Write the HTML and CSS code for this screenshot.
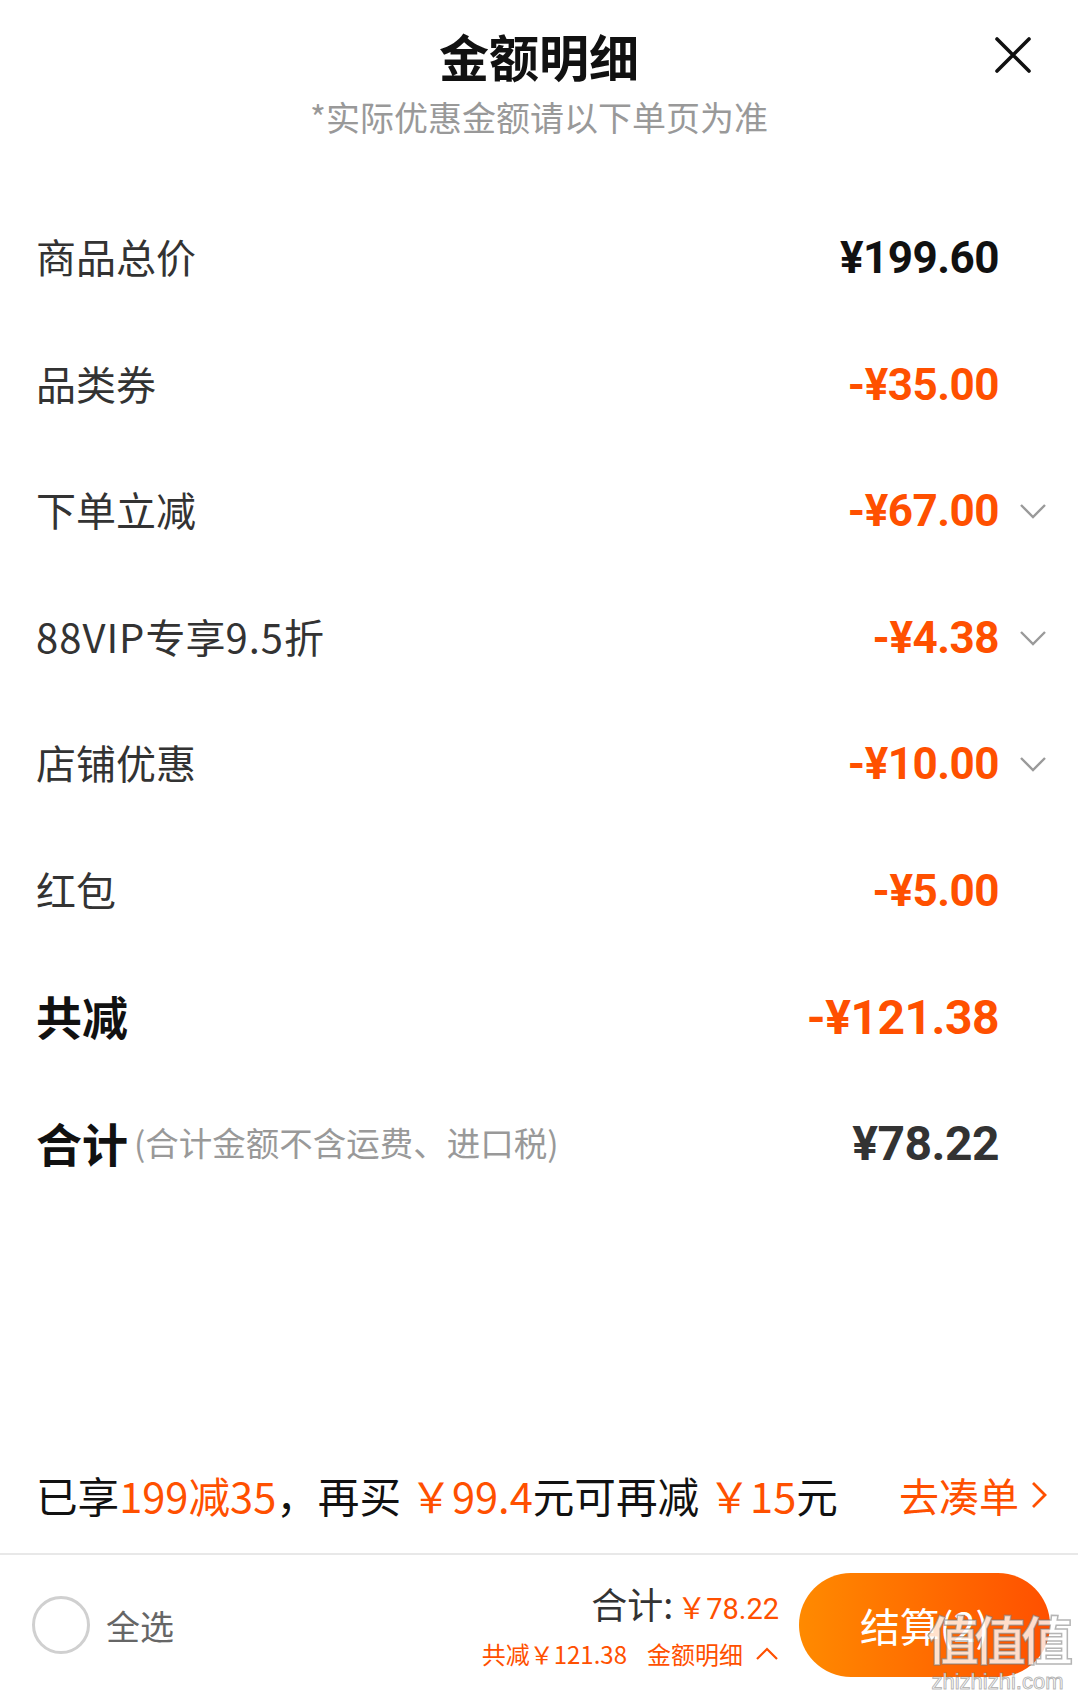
FILE: index.html
```html
<!DOCTYPE html>
<html lang="zh-CN">
<head>
    <meta charset="UTF-8">
    <title>金额明细</title>
    <link rel="stylesheet" href="styles.css">
</head>
<body>

<div class="sheet">
    <header class="sheet-head">
        <h1 class="title">金额明细</h1>
        <button class="close" aria-label="关闭">
            <svg width="36" height="36" viewBox="0 0 36 36">
                <path d="M2 2 L34 34 M34 2 L2 34" stroke="#111" stroke-width="3.6" stroke-linecap="round" fill="none"/>
            </svg>
        </button>
        <p class="subtitle">*实际优惠金额请以下单页为准</p>
    </header>

    <ul class="detail-list">
        <li class="row">
            <span class="label">商品总价</span>
            <span class="amount">¥199.60</span>
            <span class="arrow"></span>
        </li>
        <li class="row">
            <span class="label">品类券</span>
            <span class="amount minus">-¥35.00</span>
            <span class="arrow"></span>
        </li>
        <li class="row">
            <span class="label">下单立减</span>
            <span class="amount minus">-¥67.00</span>
            <span class="arrow"><svg width="28" height="18" viewBox="0 0 28 18"><path d="M2 3 L14 15 L26 3" stroke="#9a9a9a" stroke-width="2.4" fill="none"/></svg></span>
        </li>
        <li class="row">
            <span class="label"><span class="latin">88VIP</span>专享<span class="latin">9.5</span>折</span>
            <span class="amount minus">-¥4.38</span>
            <span class="arrow"><svg width="28" height="18" viewBox="0 0 28 18"><path d="M2 3 L14 15 L26 3" stroke="#9a9a9a" stroke-width="2.4" fill="none"/></svg></span>
        </li>
        <li class="row">
            <span class="label">店铺优惠</span>
            <span class="amount minus">-¥10.00</span>
            <span class="arrow"><svg width="28" height="18" viewBox="0 0 28 18"><path d="M2 3 L14 15 L26 3" stroke="#9a9a9a" stroke-width="2.4" fill="none"/></svg></span>
        </li>
        <li class="row">
            <span class="label">红包</span>
            <span class="amount minus">-¥5.00</span>
            <span class="arrow"></span>
        </li>
        <li class="row row-strong">
            <span class="label">共减</span>
            <span class="amount minus">-¥121.38</span>
            <span class="arrow"></span>
        </li>
        <li class="row row-strong">
            <span class="label label-total">合计<span class="note">(合计金额不含运费、进口税)</span></span>
            <span class="amount total">¥78.22</span>
            <span class="arrow"></span>
        </li>
    </ul>

    <div class="spacer"></div>

    <div class="promo">
        <p class="promo-text">已享<em>199减35</em>，再买 <em>￥99.4</em>元可再减 <em>￥15</em>元</p>
        <a class="promo-link" href="#">去凑单
            <svg width="16" height="30" viewBox="0 0 16 30"><path d="M2 3 L14 15 L2 27" stroke="#ff5000" stroke-width="2.8" fill="none"/></svg>
        </a>
    </div>

    <footer class="bar">
        <label class="select-all">
            <span class="radio"></span>
            <span>全选</span>
        </label>
        <div class="bar-right">
            <div class="sum">
                <div class="sum-main">合计:<span class="sum-price">￥78.22</span></div>
                <div class="sum-sub">共减￥121.38<span class="sum-detail">金额明细
                    <svg width="24" height="14" viewBox="0 0 24 14"><path d="M2 12 L12 2 L22 12" stroke="#ff5000" stroke-width="2.2" fill="none"/></svg></span>
                </div>
            </div>
            <button class="checkout">结算(2)</button>
        </div>
        <div class="watermark">
            <span class="wm-big">值值值</span>
            <span class="wm-small">zhizhizhi.com</span>
        </div>
    </footer>
</div>

</body>
</html>
```

FILE: styles.css
```css
* {
    box-sizing: border-box;
}

body {
    margin: 0;
    background-color: #fff;
    font-family: Roboto, "Noto Sans CJK SC", sans-serif;
    color: #333;
}

.sheet {
    height: 1701px;
    display: flex;
    flex-direction: column;
}

.sheet-head {
    display: grid;
    grid-template-columns: 1fr auto 1fr;
    align-items: center;
    padding: 25px 0 56px;
}

.title {
    grid-column: 2;
    margin: 0;
    font-family: "Noto Sans CJK SC", sans-serif;
    font-size: 50px;
    font-weight: 700;
    line-height: 60px;
    color: #111;
}

.close {
    grid-column: 3;
    justify-self: end;
    margin-right: 47px;
    padding: 0;
    border: none;
    background: none;
    display: flex;
}

.subtitle {
    grid-column: 1 / 4;
    margin: 10px 0 0;
    text-align: center;
    font-family: "Noto Sans CJK SC", sans-serif;
    font-size: 34px;
    line-height: 44px;
    color: #999;
}

.detail-list {
    list-style: none;
    margin: 0;
    padding: 0;
}

.row {
    display: grid;
    grid-template-columns: 1fr auto 79px;
    align-items: center;
    height: 126.5px;
    padding-left: 36px;
}

.label {
    font-family: "Noto Sans CJK SC", sans-serif;
    font-size: 40px;
    color: #333;
    margin-top: -4px;
}

.latin {
    letter-spacing: 1px;
}

.amount {
    font-size: 44px;
    font-weight: 700;
    color: #111;
    letter-spacing: -0.5px;
}

.amount.minus {
    color: #ff5000;
}

.arrow {
    display: flex;
    padding-left: 20px;
}

.row-strong .label {
    font-size: 46px;
    font-weight: 700;
    color: #111;
}

.row-strong .amount {
    font-size: 48px;
}

.amount.total {
    color: #333;
}

.label-total {
    display: flex;
    align-items: center;
}

.note {
    margin-left: 6px;
    font-size: 33.5px;
    font-weight: 400;
    color: #999;
}

.spacer {
    flex: 1;
}

.promo {
    display: flex;
    align-items: center;
    justify-content: space-between;
    height: 118px;
    padding: 0 31px 0 36px;
    border-bottom: 2px solid #e8e8e8;
}

.promo-text {
    margin: 0;
    font-family: "Noto Sans CJK SC", sans-serif;
    font-size: 41.6px;
    color: #111;
}

.promo-text em {
    font-style: normal;
    color: #ff5000;
}

.promo-link {
    display: flex;
    align-items: center;
    gap: 12px;
    font-family: "Noto Sans CJK SC", sans-serif;
    font-size: 40px;
    color: #ff5000;
    text-decoration: none;
}

.bar {
    position: relative;
    flex: 0 0 146px;
    display: flex;
    align-items: center;
    justify-content: space-between;
    padding: 0 28px 6px 32px;
}

.select-all {
    display: flex;
    align-items: center;
    gap: 16px;
    font-family: "Noto Sans CJK SC", sans-serif;
    font-size: 34px;
    color: #666;
}

.radio {
    width: 58px;
    height: 58px;
    border: 3px solid #d0d0d0;
    border-radius: 50%;
}

.bar-right {
    display: flex;
    align-items: center;
    gap: 20px;
}

.sum {
    display: flex;
    flex-direction: column;
    align-items: flex-end;
    gap: 4px;
}

.sum-main {
    font-family: "Noto Sans CJK SC", sans-serif;
    font-size: 36px;
    line-height: 48px;
    color: #333;
}

.sum-price {
    margin-left: 4px;
    font-family: Roboto, "Noto Sans CJK SC", sans-serif;
    font-size: 29px;
    color: #ff5000;
}

.sum-sub {
    display: flex;
    align-items: center;
    font-family: "Noto Sans CJK SC", sans-serif;
    font-size: 24px;
    line-height: 34px;
    color: #ff5000;
}

.sum-detail {
    display: flex;
    align-items: center;
    gap: 12px;
    margin-left: 20px;
}

.checkout {
    width: 251px;
    height: 104px;
    border: none;
    border-radius: 52px;
    background: linear-gradient(90deg, #ff8a00, #ff5000);
    color: #fff;
    font-family: "Noto Sans CJK SC", sans-serif;
    font-size: 40px;
}

.watermark {
    position: absolute;
    right: 10px;
    bottom: 6px;
    display: flex;
    flex-direction: column;
    align-items: center;
    pointer-events: none;
}

.wm-big {
    font-family: "Noto Sans CJK SC", sans-serif;
    font-size: 52px;
    font-weight: 700;
    line-height: 62px;
    letter-spacing: -5px;
    color: rgba(255, 255, 255, 0.8);
    -webkit-text-stroke: 1.5px rgba(120, 120, 120, 0.55);
}

.wm-small {
    font-family: "Liberation Sans", sans-serif;
    font-size: 22px;
    line-height: 26px;
    color: rgba(255, 255, 255, 0.9);
    -webkit-text-stroke: 1px rgba(120, 120, 120, 0.55);
}
```
